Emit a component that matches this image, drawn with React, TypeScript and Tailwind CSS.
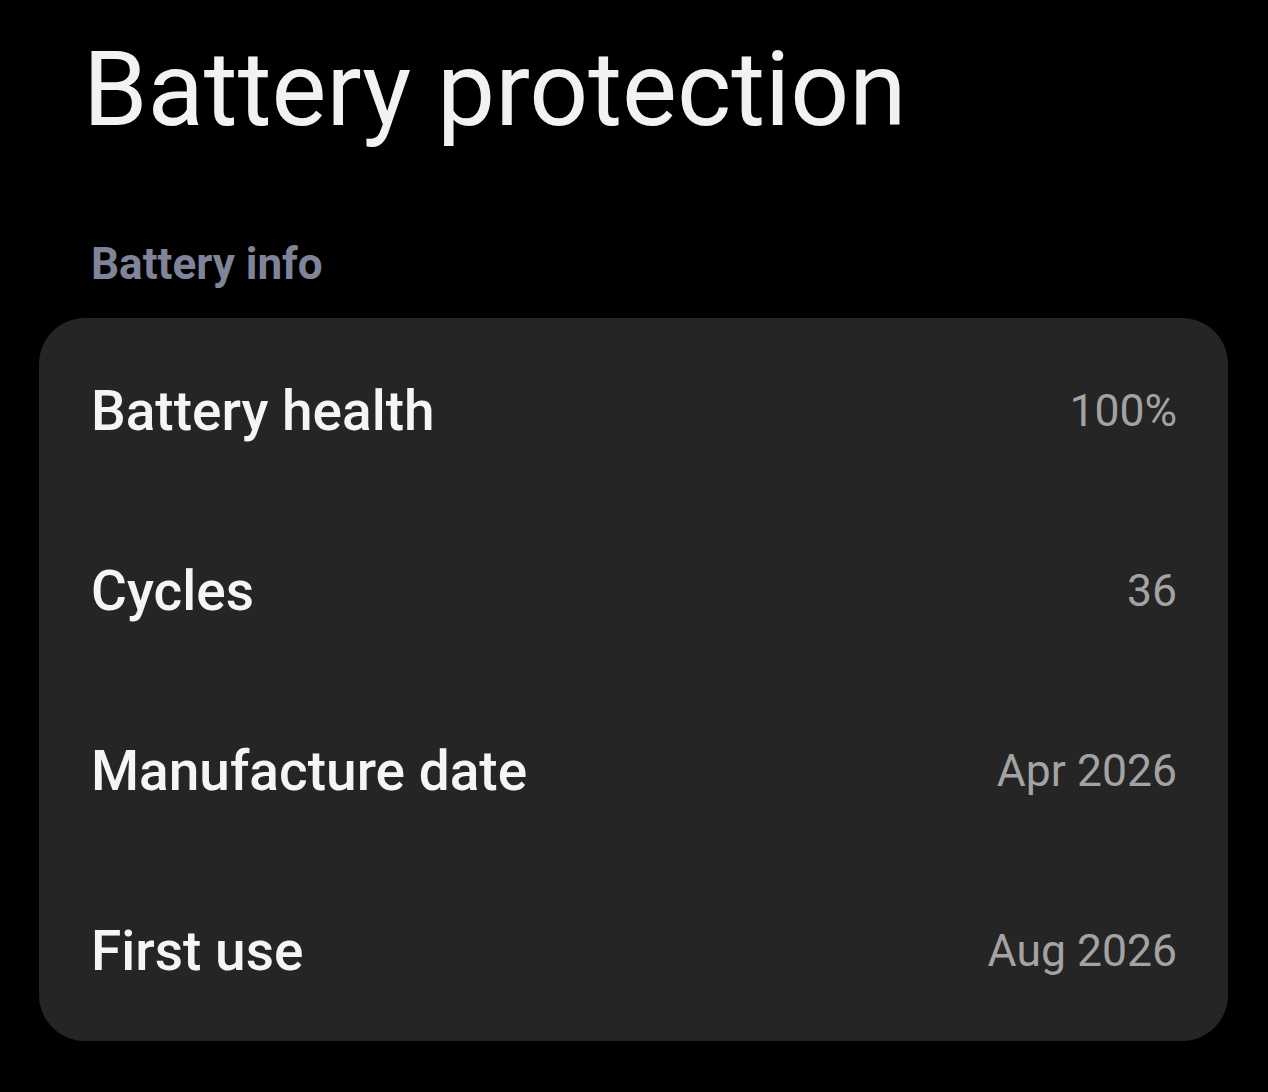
import React from "react";

const rows = [
  { label: "Battery health", value: "100%" },
  { label: "Cycles", value: "36" },
  { label: "Manufacture date", value: "Apr 2026" },
  { label: "First use", value: "Aug 2026" },
];

export default function App() {
  return (
    <div
      className="w-[1268px] h-[1092px] bg-black overflow-hidden"
      style={{ fontFamily: "Roboto, 'Noto Sans', sans-serif" }}
    >
      <h1 className="pl-[83px] pt-[20px] text-[103.5px] leading-[140px] text-[#f2f2f2] font-normal">
        Battery protection
      </h1>
      <div className="pl-[91px] mt-[76px] text-[44px] leading-[56px] font-bold text-[#7f8498]">
        Battery info
      </div>
      <div className="mx-[39px] mt-[26px] w-[1189px] h-[723px] rounded-[46px] bg-[#252525] pt-[3px] flex flex-col">
        {rows.map((r) => (
          <div
            key={r.label}
            className="h-[181px] flex items-center justify-between pl-[52px] pr-[51px]"
          >
            <span className="text-[55px] font-medium text-[#f5f5f5]">{r.label}</span>
            <span className="text-[44.5px] font-normal text-[#a3a3a3]">{r.value}</span>
          </div>
        ))}
      </div>
    </div>
  );
}
